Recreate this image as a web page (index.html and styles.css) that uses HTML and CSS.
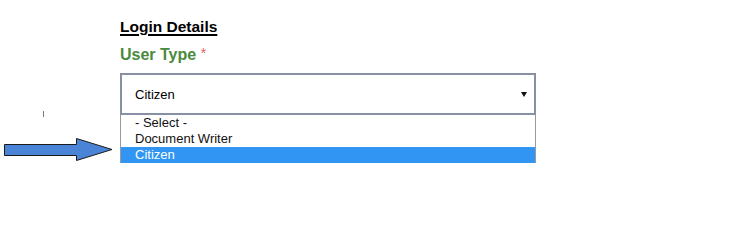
FILE: index.html
```html
<!DOCTYPE html>
<html>
<head>
<meta charset="utf-8">
<link rel="stylesheet" href="styles.css">
</head>
<body>
<div class="page">
  <div class="aside">
    <svg class="pointer" width="120" height="170" viewBox="0 0 120 170" xmlns="http://www.w3.org/2000/svg">
      <line x1="43.5" y1="111" x2="43.5" y2="117" stroke="#777" stroke-width="1"/>
      <polygon points="4.5,144.5 76.5,144.5 76.5,138.5 112,149.5 76.5,160.5 76.5,155.5 4.5,155.5" fill="#4a84d6" stroke="#1a1a1a" stroke-width="1" stroke-linejoin="miter"/>
    </svg>
  </div>
  <div class="form">
    <div class="section-title">Login Details</div>
    <div class="field-label">User Type <span class="req">*</span></div>
    <div class="select">
      <span class="select-value">Citizen</span>
      <span class="caret"></span>
    </div>
    <ul class="listbox">
      <li class="option">- Select -</li>
      <li class="option">Document Writer</li>
      <li class="option selected">Citizen</li>
    </ul>
  </div>
</div>
</body>
</html>
```

FILE: styles.css
```css
html, body {
  margin: 0;
  padding: 0;
  background: #ffffff;
}

body {
  font-family: "Liberation Sans", Arial, sans-serif;
  color: #000;
}

.page {
  display: flex;
  width: 744px;
  height: 212px;
}

.aside {
  width: 120px;
  flex: none;
}

.pointer {
  display: block;
}

.form {
  width: 416px;
  padding-top: 18px;
}

.section-title {
  font-size: 15.5px;
  font-weight: bold;
  line-height: 18px;
  text-decoration: underline;
  text-decoration-thickness: 1.5px;
  text-underline-offset: 2px;
}

.field-label {
  margin-top: 7px;
  font-size: 16px;
  font-weight: bold;
  line-height: 20px;
  color: #4a8a40;
}

.req {
  font-weight: normal;
  font-size: 14px;
  color: #e8625f;
  vertical-align: 2px;
}

.select {
  margin-top: 8px;
  box-sizing: border-box;
  height: 42px;
  border: 2px solid #8790a4;
  display: flex;
  align-items: center;
  justify-content: space-between;
  padding: 0 7px 0 13px;
  font-size: 13px;
  line-height: 15px;
}

.caret {
  width: 0;
  height: 0;
  border-left: 3px solid transparent;
  border-right: 3px solid transparent;
  border-top: 5px solid #111;
  margin-top: 1px;
}

.listbox {
  list-style: none;
  margin: 0;
  padding: 0;
  border-left: 1px solid #9a9a9a;
  border-right: 1px solid #9a9a9a;
}

.option {
  font-size: 13px;
  line-height: 16px;
  height: 16px;
  padding-left: 14px;
  color: #111;
}

.option.selected {
  background: #3196f3;
  color: #ffffff;
}
```
